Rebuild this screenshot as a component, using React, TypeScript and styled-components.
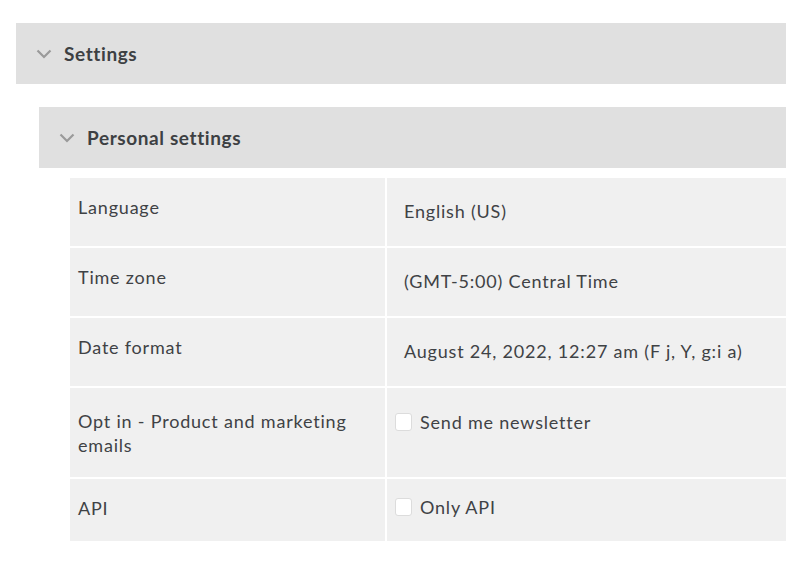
import React from 'react';
import styled, { createGlobalStyle } from 'styled-components';

const GlobalStyle = createGlobalStyle`
    body {
        margin: 0;
        background: #ffffff;
        font-family: Lato, 'Open Sans', sans-serif;
        color: #3f4245;
    }
`;

const Page = styled.div`
    padding: 23px 0 0 16px;
`;

const Section = styled.section``;

const SectionHeader = styled.div`
    display: flex;
    align-items: center;
    height: 61px;
    padding-left: 20px;
    background: #e0e0e0;
`;

const Chevron = styled.svg`
    width: 16px;
    height: 10px;
    margin-right: 12px;
    flex-shrink: 0;
`;

const Title = styled.h2`
    margin: 0;
    font-size: 19px;
    font-weight: 700;
    letter-spacing: 0.6px;
    color: #3d4043;
`;

const SectionBody = styled.div`
    padding: 23px 0 0 23px;
`;

const SubBody = styled.div`
    padding: 10px 0 0 31px;
    display: flex;
    flex-direction: column;
    gap: 2px;
`;

const Row = styled.div<{ $height: number }>`
    display: grid;
    grid-template-columns: 315px 1fr;
    column-gap: 2px;
    height: ${p => p.$height}px;
`;

const Cell = styled.div`
    background: #f0f0f0;
    font-size: 18px;
    line-height: 24px;
    letter-spacing: 0.8px;
`;

const Label = styled(Cell)<{ $top: number }>`
    padding: ${p => p.$top}px 8px 0 8px;
`;

const Value = styled(Cell)<{ $top: number; $left: number }>`
    padding: ${p => p.$top}px 8px 0 ${p => p.$left}px;
`;

const CheckLabel = styled.label`
    display: flex;
    align-items: center;
    gap: 8px;
`;

const Box = styled.span`
    width: 17px;
    height: 18px;
    box-sizing: border-box;
    border: 1px solid #dcdcdc;
    border-radius: 3px;
    background: #ffffff;
    flex-shrink: 0;
`;

const ChevronIcon = () => (
    <Chevron viewBox="0 0 16 10">
        <path d="M1.5 1.5 L8 8 L14.5 1.5" fill="none" stroke="#9a9a9a" strokeWidth="2.2" />
    </Chevron>
);

interface Setting {
    label: string;
    value: string;
    checkbox?: boolean;
    height: number;
    labelTop: number;
    valueTop: number;
}

const settings: Setting[] = [
    { label: 'Language', value: 'English (US)', height: 68, labelTop: 17, valueTop: 21 },
    { label: 'Time zone', value: '(GMT-5:00) Central Time', height: 68, labelTop: 17, valueTop: 21 },
    { label: 'Date format', value: 'August 24, 2022, 12:27 am (F j, Y, g:i a)', height: 68, labelTop: 17, valueTop: 21 },
    {
        label: 'Opt in - Product and marketing emails',
        value: 'Send me newsletter',
        checkbox: true,
        height: 89,
        labelTop: 21,
        valueTop: 22,
    },
    { label: 'API', value: 'Only API', checkbox: true, height: 62, labelTop: 17, valueTop: 16 },
];

const App = () => (
    <>
        <GlobalStyle />
        <Page>
            <Section>
                <SectionHeader>
                    <ChevronIcon />
                    <Title>Settings</Title>
                </SectionHeader>
                <SectionBody>
                    <Section>
                        <SectionHeader>
                            <ChevronIcon />
                            <Title>Personal settings</Title>
                        </SectionHeader>
                        <SubBody>
                            {settings.map(s => (
                                <Row key={s.label} $height={s.height}>
                                    <Label $top={s.labelTop}>{s.label}</Label>
                                    <Value $top={s.valueTop} $left={s.checkbox ? 8 : 17}>
                                        {s.checkbox ? (
                                            <CheckLabel>
                                                <Box />
                                                {s.value}
                                            </CheckLabel>
                                        ) : (
                                            s.value
                                        )}
                                    </Value>
                                </Row>
                            ))}
                        </SubBody>
                    </Section>
                </SectionBody>
            </Section>
        </Page>
    </>
);

export default App;
